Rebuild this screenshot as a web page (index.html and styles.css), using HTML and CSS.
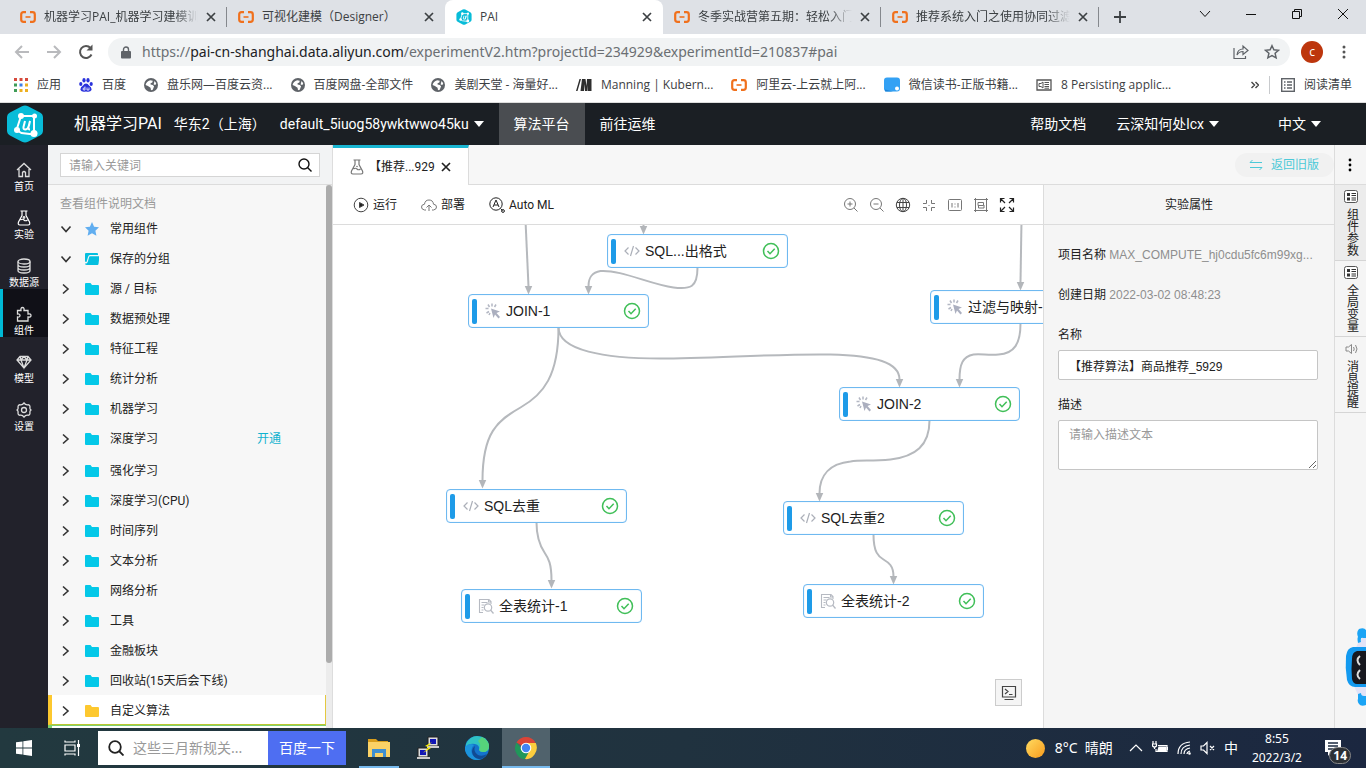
FILE: index.html
```html
<!DOCTYPE html>
<html lang="zh-CN">
<head>
<meta charset="utf-8">
<title>PAI</title>
<link rel="stylesheet" href="styles.css">
</head>
<body>
<svg class="defs" aria-hidden="true">
  <symbol id="ali" viewBox="0 0 16 12"><path d="M6 1.200H3.500Q1.200 1.200 1.200 3.500V8.500Q1.200 10.800 3.500 10.800H6M10 1.200h2.500Q14.800 1.200 14.800 3.500V8.500Q14.800 10.800 12.500 10.800H10" fill="none" stroke="#f0701c" stroke-width="2.200"/><path d="M5.500 6h5" stroke="#f0701c" stroke-width="1.600"/></symbol>
  <symbol id="pai" viewBox="0 0 36 38"><path d="M15 1.200q3-1.600 6 0l12 6.300q3 1.700 3 5v13q0 3.300-3 5L21 36.800q-3 1.600-6 0L3 30.500q-3-1.700-3-5v-13q0-3.300 3-5z" fill="#08bcd8"/><g stroke="#fff" stroke-width="2" fill="none"><path d="M14 11h13M14 11 9.500 25M27 11v17M9.500 25l5 3 12.500 1.500"/><path d="m18 16-1.500 6q-.5 2.500 2 2.500 2.500-.5 3.500-4l1-4.500-1.500 6q-.5 2.500 1.500 2.500"/></g><g fill="#fff"><circle cx="14" cy="11" r="3"/><circle cx="27.500" cy="11" r="2.500"/><circle cx="10" cy="25" r="3"/><circle cx="27" cy="28.500" r="3.500"/></g></symbol>
  <symbol id="x" viewBox="0 0 10 10"><path d="m1 1 8 8M9 1 1 9" stroke="currentColor" stroke-width="1.700"/></symbol>
  <symbol id="globe" viewBox="0 0 16 16"><circle cx="8" cy="8" r="8" fill="#5f6368"/><path d="M1.800 8q1-4.500 5.200-5.500L10 3 9.500 5l-2 1v1.500l2.500.5 1.500 1.500L10 13.500l-2 .5-.5-3L4.500 9zM12 3.500l2 2.500-1 2-2-.5z" fill="#fff"/></symbol>
  <symbol id="down" viewBox="0 0 12 12"><path d="m1.500 3.500 4.500 5 4.500-5" fill="none" stroke="currentColor" stroke-width="1.600"/></symbol>
  <symbol id="right" viewBox="0 0 12 12"><path d="m3 1.500 5 4.500-5 4.500" fill="none" stroke="currentColor" stroke-width="1.600"/></symbol>
  <symbol id="caret" viewBox="0 0 10 6"><path d="M0 0h10L5 6z" fill="currentColor"/></symbol>
  <symbol id="folder" viewBox="0 0 14 12"><path d="M1 0h4.500L7 2h6q1 0 1 1v8q0 1-1 1H1q-1 0-1-1V1q0-1 1-1" fill="currentColor"/></symbol>
  <symbol id="flask" viewBox="0 0 14 16"><path d="M3.500 1h7M5 1v4.500L1.500 12Q.5 15 3 15h8q2.500 0 1.500-3L9 5.500V1M3.500 10q2-1.500 3.500 0t3.500 0" fill="none" stroke="currentColor" stroke-width="1.200"/><circle cx="7" cy="7.500" r=".8" fill="currentColor"/></symbol>
  <symbol id="code" viewBox="0 0 16 12"><path d="M4.500 2.500 1 6l3.500 3.500M11.500 2.500 15 6l-3.500 3.500M9.500 1l-3 10" fill="none" stroke="#abafb8" stroke-width="1.200"/></symbol>
  <symbol id="click" viewBox="0 0 16 16"><path d="M7 .5v3M3 1.500l1.500 2.500M.5 5.500h3M1.500 10l2.500-1.500M11 1.500 9.500 4M4 12l1-2" stroke="#b3b7c3" stroke-width="1.500"/><path d="m6 5.500 9 3-3.500 1.500 3.500 4-1.500 1.500-3.500-4-1.500 3.500z" fill="#abafbf"/></symbol>
  <symbol id="stat" viewBox="0 0 16 16"><path d="M5 14.500H1.500v-13H11l2 2V6M3.500 4.500h6M3.500 7h3M3.500 9.500h2M3.500 12h2M10.500 1.500v2.500H13" fill="none" stroke="#b6bac2" stroke-width="1.100"/><circle cx="10" cy="9.500" r="3.700" fill="#fff" stroke="#b6bac2" stroke-width="1.200"/><path d="m12.500 12 3 3.500" stroke="#b6bac2" stroke-width="1.300"/></symbol>
  <symbol id="ok" viewBox="0 0 18 18"><circle cx="9" cy="9" r="7.500" fill="none" stroke="#40bf58" stroke-width="1.500"/><path d="m5.500 9 2.500 2.700 4.700-5" fill="none" stroke="#40bf58" stroke-width="1.500"/></symbol>
  <symbol id="params" viewBox="0 0 14 14"><rect x=".5" y=".5" width="13" height="12" rx="2" fill="#fff" stroke="#555"/><path d="M3 3h3v3H3zM3 7.500h3v3H3z" fill="#333"/><path d="M7.500 3.500H12M7.500 5.500H12M7.500 8H12M7.500 10H12" stroke="#333" stroke-width="1.200"/></symbol>
</svg>

<header class="browser">
  <nav class="tabs">
    <div class="tab"><svg class="i16"><use href="#ali"/></svg><span class="fade">机器学习PAI_机器学习建模训</span><button aria-label="关闭"><svg><use href="#x"/></svg></button></div>
    <div class="tab plain"><svg class="i16"><use href="#ali"/></svg><span>可视化建模（Designer）</span><button aria-label="关闭"><svg><use href="#x"/></svg></button></div>
    <div class="tab current"><svg class="i16"><use href="#pai"/></svg><span>PAI</span><button aria-label="关闭"><svg><use href="#x"/></svg></button></div>
    <div class="tab"><svg class="i16"><use href="#ali"/></svg><span class="fade">冬季实战营第五期：轻松入门</span><button aria-label="关闭"><svg><use href="#x"/></svg></button></div>
    <div class="tab"><svg class="i16"><use href="#ali"/></svg><span class="fade">推荐系统入门之使用协同过滤</span><button aria-label="关闭"><svg><use href="#x"/></svg></button></div>
    <button class="plus" aria-label="新标签页"><svg viewBox="0 0 12 12"><path d="M6 0v12M0 6h12" stroke="currentColor" stroke-width="1.800"/></svg></button>
    <div class="win">
      <button aria-label="搜索标签页"><svg viewBox="0 0 12 12"><path d="m1 3 5 5.500L11 3"/></svg></button>
      <button aria-label="最小化"><svg viewBox="0 0 12 12"><path d="M1 6.500h10"/></svg></button>
      <button aria-label="还原"><svg viewBox="0 0 12 12"><path d="M1.500 3.500h7v7h-7zM3.500 3V1.500h7v7H9"/></svg></button>
      <button aria-label="关闭窗口"><svg viewBox="0 0 12 12"><path d="m1 1 10 10M11 1 1 11"/></svg></button>
    </div>
  </nav>
  <div class="bar">
    <button class="nav off" aria-label="后退"><svg viewBox="0 0 16 16"><path d="M15 8H2M8 2 2 8l6 6"/></svg></button>
    <button class="nav off" aria-label="前进"><svg viewBox="0 0 16 16"><path d="M1 8h13M8 2l6 6-6 6"/></svg></button>
    <button class="nav" aria-label="刷新"><svg viewBox="0 0 16 16"><path d="M13.500 10.500A6 6 0 1 1 12.500 4"/><path d="M14.500.500v6h-6z" fill="currentColor" stroke="none"/></svg></button>
    <div class="omni">
      <svg class="lock" viewBox="0 0 10 13"><rect y="5" width="10" height="7.500" rx="1" fill="#5f6368"/><path d="M2.500 5V3.500a2.500 2.500 0 0 1 5 0V5" fill="none" stroke="#5f6368" stroke-width="1.400"/></svg>
      <span class="url">https://<b>pai-cn-shanghai.data.aliyun.com</b>/experimentV2.htm?projectId=234929&amp;experimentId=210837#pai</span>
      <button aria-label="分享"><svg viewBox="0 0 16 16"><path d="M1 4v10.500h11.500V12M4 11q.5-6 6-6V2l5 4.500-5 4v-3q-4 0-6 3.500z" fill="none" stroke="#5f6368" stroke-width="1.200"/></svg></button>
      <button aria-label="收藏"><svg viewBox="0 0 16 16"><path d="m8 1.700 1.900 4.100 4.600.5-3.400 3 1 4.500L8 11.500l-4.100 2.300 1-4.500-3.400-3 4.600-.5z" fill="none" stroke="#5f6368" stroke-width="1.500"/></svg></button>
    </div>
    <button class="avatar">c</button>
    <button class="nav" aria-label="菜单"><svg viewBox="0 0 16 16"><g fill="currentColor" stroke="none"><circle cx="8" cy="3" r="1.500"/><circle cx="8" cy="8" r="1.500"/><circle cx="8" cy="13" r="1.500"/></g></svg></button>
  </div>
  <nav class="marks">
    <a href="#"><svg class="i14" viewBox="0 0 14 14"><path d="M0 0h3v3H0zM5.500 0h3v3h-3zM11 0h3v3h-3z" fill="#d64a3c"/><path d="M0 5.500h3v3H0zM0 11h3v3H0z" fill="#3f9c58"/><path d="M5.500 5.500h3v3h-3z" fill="#3d7fe8"/><path d="M11 5.500h3v3h-3zM5.500 11h3v3h-3zM11 11h3v3h-3z" fill="#eeb021"/></svg>应用</a>
    <a href="#"><svg class="i14" viewBox="0 0 14 14"><g fill="#2a32dc"><ellipse cx="1.800" cy="6" rx="1.600" ry="2"/><ellipse cx="5" cy="2.300" rx="1.600" ry="2.200"/><ellipse cx="9" cy="2.300" rx="1.600" ry="2.200"/><ellipse cx="12.200" cy="6" rx="1.600" ry="2"/><path d="M7 5.500q2 0 3 2 3 2 2.500 4.500-1 2.500-5.500 1.500-4.500 1-5.500-1.500Q1 9.500 4 7.500q1-2 3-2"/></g><path d="M6 8.500v3.500H4.500q-1-1 0-2H6M8 9.500v2.500h2V9.500" fill="none" stroke="#fff" stroke-width=".8"/></svg>百度</a>
    <a href="#"><svg class="i14"><use href="#globe"/></svg>盘乐网—百度云资...</a>
    <a href="#"><svg class="i14"><use href="#globe"/></svg>百度网盘-全部文件</a>
    <a href="#"><svg class="i14"><use href="#globe"/></svg>美剧天堂 - 海量好...</a>
    <a href="#"><svg class="i16" viewBox="0 0 16 12"><path d="M3.500 0H5L1.500 12H0zM6 0h3.500l1 7 .5-7h4.500v12h-4V6l-.5 6H9L8 5v7H4.500z" fill="#2e2e2e"/></svg>Manning | Kubern...</a>
    <a href="#"><svg class="i16"><use href="#ali"/></svg>阿里云-上云就上阿...</a>
    <a href="#"><svg class="i16" viewBox="0 0 16 15"><rect width="16" height="14" rx="3" fill="#33a1f4"/><circle cx="13" cy="11" r="2" fill="#fff"/><path d="M1 12v2h8z" fill="#1c84d8"/></svg>微信读书-正版书籍...</a>
    <a href="#"><svg class="i16" viewBox="0 0 16 12"><path d="M1 1h14v10H1z" fill="none" stroke="#555" stroke-width="1.300"/><path d="M3 4.500h2l2-1.500v6L5 7.500H3zM8.500 3.500H13M8.500 5.500H13M8.500 7.500H13M8.500 9.200H13" fill="none" stroke="#555"/></svg>8 Persisting applic...</a>
    <button class="more" aria-label="更多书签"><svg viewBox="0 0 8 8"><path d="m.5 1 3 3-3 3M4.500 1l3 3-3 3" fill="none" stroke="#444" stroke-width="1.400"/></svg></button>
    <a class="reading" href="#"><svg class="i14" viewBox="0 0 14 14"><rect x=".7" y=".7" width="12.600" height="12.600" fill="none" stroke="#5f6368" stroke-width="1.400"/><path d="M3 4h1.500M3 7h1.500M3 10h1.500M6 4h5M6 7h5M6 10h5" stroke="#5f6368" stroke-width="1.400"/></svg>阅读清单</a>
  </nav>
</header>

<header class="top">
  <svg class="brand"><use href="#pai"/></svg>
  <span class="product">机器学习PAI</span>
  <span class="region">华东2（上海）</span>
  <button class="project">default_5iuog58ywktwwo45ku<svg><use href="#caret"/></svg></button>
  <a class="on" href="#">算法平台</a>
  <a href="#">前往运维</a>
  <a class="help" href="#">帮助文档</a>
  <button>云深知何处lcx<svg><use href="#caret"/></svg></button>
  <button class="lang">中文<svg><use href="#caret"/></svg></button>
</header>

<main class="app">
  <nav class="rail">
    <a href="#"><svg viewBox="0 0 16 16"><path d="M1 8 8 1.500 15 8M3 7v7.500h3.500v-4q1.500-2 3 0v4H13V7"/></svg>首页</a>
    <a href="#"><svg><use href="#flask"/></svg>实验</a>
    <a href="#"><svg viewBox="0 0 16 16"><ellipse cx="8" cy="3.500" rx="6" ry="2.500"/><path d="M2 3.500v9q0 2.500 6 2.500t6-2.500v-9M2 6.500Q2 9 8 9t6-2.500M2 9.500Q2 12 8 12t6-2.500"/></svg>数据源</a>
    <a class="on" href="#"><svg viewBox="0 0 16 16"><path d="M1.500 4.500H5q-.5-3 1.500-3t1.500 3h4V8q3-.5 3 1.500t-3 1.500v4H1.500v-4q2.500.3 2.500-1.500T1.500 8z"/></svg>组件</a>
    <a href="#"><svg viewBox="0 0 16 16"><path d="M4 2.500h8L15 6l-7 8-7-8zM1 6h14M5 6l3 8 3-8M4 2.500 5 6l3-3.500L11 6l1-3.500"/></svg>模型</a>
    <a href="#"><svg viewBox="0 0 16 16"><path d="M8 1q1.500 2 3.500 1.800Q14 2.500 14 5q-.5 2 1 3-1.500 1-1 3 0 2.500-2.500 2.200Q9.500 13 8 15q-1.500-2-3.500-1.800Q2 13.500 2 11q.5-2-1-3 1.500-1 1-3 0-2.500 2.500-2.200Q6.500 3 8 1z"/><circle cx="8" cy="8" r="2.500"/></svg>设置</a>
  </nav>

  <aside class="parts">
    <form class="find"><label><input type="text" placeholder="请输入关键词" aria-label="请输入关键词"></label><button type="button" aria-label="搜索"><svg viewBox="0 0 14 14"><circle cx="6" cy="6" r="5"/><path d="m9.500 9.500 4 4"/></svg></button></form>
    <div class="scroll">
      <div class="tree">
        <a class="doc" href="#">查看组件说明文档</a>
        <ul>
          <li><svg class="arr"><use href="#down"/></svg><svg class="fold" viewBox="0 0 14 14"><path d="m7 0 2.100 4.700 4.900.6-3.600 3.400 1 5.100L7 11.300l-4.400 2.500 1-5.100L0 5.300l4.900-.6z" fill="#61aef0"/></svg>常用组件</li>
          <li><svg class="arr"><use href="#down"/></svg><svg class="fold" viewBox="0 0 14 12"><path d="M1 0h11q1 0 1 1v1H5Q3.500 2 3 4L1.500 9H1Q0 9 0 8V1q0-1 1-1M5 3.200h9.500L13.500 11q-.2 1-1 1H2q-2 0-2-1.500 2 .5 2.800-1.800L4 4.500q.3-1.300 1-1.300" fill="#04bfdf"/></svg>保存的分组</li>
          <li><svg class="arr"><use href="#right"/></svg><svg class="fold"><use href="#folder"/></svg>源 / 目标</li>
          <li><svg class="arr"><use href="#right"/></svg><svg class="fold"><use href="#folder"/></svg>数据预处理</li>
          <li><svg class="arr"><use href="#right"/></svg><svg class="fold"><use href="#folder"/></svg>特征工程</li>
          <li><svg class="arr"><use href="#right"/></svg><svg class="fold"><use href="#folder"/></svg>统计分析</li>
          <li><svg class="arr"><use href="#right"/></svg><svg class="fold"><use href="#folder"/></svg>机器学习</li>
          <li class="tall"><svg class="arr"><use href="#right"/></svg><svg class="fold"><use href="#folder"/></svg>深度学习<a href="#">开通</a></li>
          <li><svg class="arr"><use href="#right"/></svg><svg class="fold"><use href="#folder"/></svg>强化学习</li>
          <li><svg class="arr"><use href="#right"/></svg><svg class="fold"><use href="#folder"/></svg>深度学习(CPU)</li>
          <li><svg class="arr"><use href="#right"/></svg><svg class="fold"><use href="#folder"/></svg>时间序列</li>
          <li><svg class="arr"><use href="#right"/></svg><svg class="fold"><use href="#folder"/></svg>文本分析</li>
          <li><svg class="arr"><use href="#right"/></svg><svg class="fold"><use href="#folder"/></svg>网络分析</li>
          <li><svg class="arr"><use href="#right"/></svg><svg class="fold"><use href="#folder"/></svg>工具</li>
          <li><svg class="arr"><use href="#right"/></svg><svg class="fold"><use href="#folder"/></svg>金融板块</li>
          <li><svg class="arr"><use href="#right"/></svg><svg class="fold"><use href="#folder"/></svg>回收站(15天后会下线)</li>
          <li class="custom"><svg class="arr"><use href="#right"/></svg><svg class="fold"><use href="#folder"/></svg>自定义算法</li>
          <li class="next"></li>
        </ul>
      </div>
      <div class="track"><div class="thumb"></div></div>
    </div>
  </aside>

  <section class="work">
    <div class="files">
      <div class="file"><svg class="beaker"><use href="#flask"/></svg><span>【推荐...929</span><button aria-label="关闭"><svg><use href="#x"/></svg></button></div>
      <button class="back"><svg viewBox="0 0 14 10"><path d="M3.500 0 1 2.500H13M1 7.500h12L10.500 10" fill="none" stroke="currentColor"/></svg>返回旧版</button>
    </div>
    <div class="split">
      <div class="editor">
        <div class="tools">
          <button><svg class="mid" viewBox="0 0 16 16"><circle cx="8" cy="8" r="6.800"/><path d="m6.500 5.500 4.500 2.500-4.500 2.500z" fill="#222"/></svg>运行</button>
          <button><svg viewBox="0 0 16 16"><path d="M5 13H3.500Q.5 12.500.5 10T3.500 7.200Q4 3 8 3t4.500 4.200q3 .3 3 2.800T12.500 13H11M8 14V8M5.500 10.500 8 8l2.500 2.500"/></svg>部署</button>
          <button><svg class="dark" viewBox="0 0 16 16"><circle cx="7" cy="7" r="6.200"/><path d="m4 10 3-7 3 7M5 8h4M11.500 11.500l2 2"/><circle cx="14" cy="14" r="1.400"/></svg>Auto ML</button>
          <div class="zoom">
            <button aria-label="放大"><svg viewBox="0 0 16 16"><circle cx="7" cy="7" r="5.500"/><path d="m11 11 3.500 3.500M4.500 7h5M7 4.500v5"/></svg></button>
            <button aria-label="缩小"><svg viewBox="0 0 16 16"><circle cx="7" cy="7" r="5.500"/><path d="m11 11 3.500 3.500M4.500 7h5"/></svg></button>
            <button aria-label="全局"><svg class="mid" viewBox="0 0 16 16"><circle cx="8" cy="8" r="6.700"/><ellipse cx="8" cy="8" rx="3.500" ry="6.700"/><path d="M2 5.500h12M2 10.500h12M8 1v14"/></svg></button>
            <button aria-label="居中"><svg viewBox="0 0 16 16"><path d="M2 6.500h3.500V3M14 6.500h-3.500V3M2 10.500h3.500V14M14 10.500h-3.500V14M7.500 8.500h1"/></svg></button>
            <button aria-label="原始大小"><svg viewBox="0 0 16 16"><rect x="1.500" y="2.500" width="13" height="11" rx="1"/><path d="M5 6v4.500M11 6v4.500M8 6.500v1M8 9.500v1"/></svg></button>
            <button aria-label="框选"><svg viewBox="0 0 16 16"><path d="M2.500 1v14M13.500 1v14M1 2.500h14M1 13.500h14M5 5.500h5.500v3H5zM5.500 8.500V11H11V8"/></svg></button>
            <button aria-label="全屏"><svg class="dark" viewBox="0 0 16 16"><path d="M1.500 5.500v-4h4M10.500 1.500h4v4M14.500 10.500v4h-4M5.500 14.500h-4v-4M2 2l4 4M14 2l-4 4M2 14l4-4M14 14l-4-4" stroke-width="1.200"/></svg></button>
          </div>
        </div>
        <div class="canvas">
          <svg class="edges">
            <marker id="tip" markerUnits="userSpaceOnUse" markerWidth="10" markerHeight="10" refX="5" refY="1"><path d="M1 0h8L5 9z" fill="#b3b6ba"/></marker>
            <g transform="translate(-332.500 -224.500)">
              <path d="M525 220Q526 240 528 286"/>
              <path d="M643 220v6"/>
              <path d="M697 267C697 287 690 289 673 287C650 284 620 269 600 270.500C591 272 588 277 588 286"/>
              <path d="M558 327C558 375 543 394 520 407S482 432 482 480"/>
              <path d="M558 327C558 350 604 358 660 358C710 358 780 353 830 354C875 355 899 362 899 379"/>
              <path d="M1021 220 1020 282"/>
              <path d="M1020 323C1020 343 1014 353 998 354C988 355 980 353 973 354C962 356 959 364 959 379"/>
              <path d="M929 420C929 445 915 456 890 459C870 461 860 459 850 461C830 463 819 474 819 493"/>
              <path d="M536 522C536 538 540 546 544 552S551 563 551 580"/>
              <path d="M873 534C873 552 878 556 883 559S893 565 893 576"/>
            </g>
          </svg>
          <div class="node n1"><svg><use href="#code"/></svg><span>SQL...出格式</span><svg class="ok"><use href="#ok"/></svg></div>
          <div class="node n2"><svg><use href="#click"/></svg><span>JOIN-1</span><svg class="ok"><use href="#ok"/></svg></div>
          <div class="node n3"><svg><use href="#click"/></svg><span>过滤与映射-1</span><svg class="ok"><use href="#ok"/></svg></div>
          <div class="node n4"><svg><use href="#click"/></svg><span>JOIN-2</span><svg class="ok"><use href="#ok"/></svg></div>
          <div class="node n5"><svg><use href="#code"/></svg><span>SQL去重</span><svg class="ok"><use href="#ok"/></svg></div>
          <div class="node n6"><svg><use href="#code"/></svg><span>SQL去重2</span><svg class="ok"><use href="#ok"/></svg></div>
          <div class="node n7"><svg><use href="#stat"/></svg><span>全表统计-1</span><svg class="ok"><use href="#ok"/></svg></div>
          <div class="node n8"><svg><use href="#stat"/></svg><span>全表统计-2</span><svg class="ok"><use href="#ok"/></svg></div>
          <button class="console" aria-label="控制台"><svg viewBox="0 0 16 16"><path d="M1.500 1.500h13v10.500h-13zM3.500 14.500h9M4 4l3 2.500L4 9M8 9.500h3.500" fill="none" stroke="#444" stroke-width="1.200"/></svg></button>
        </div>
      </div>
      <form class="props">
        <h2>实验属性</h2>
        <div class="fields">
          <p>项目名称 <span>MAX_COMPUTE_hj0cdu5fc6m99xg...</span></p>
          <p>创建日期 <span>2022-03-02 08:48:23</span></p>
          <label for="name">名称</label>
          <input id="name" type="text" value="【推荐算法】商品推荐_5929">
          <label for="desc">描述</label>
          <textarea id="desc" placeholder="请输入描述文本"></textarea>
        </div>
      </form>
    </div>
  </section>

  <nav class="side">
    <button class="dots" aria-label="更多"><svg viewBox="0 0 4 14"><circle cx="2" cy="2" r="1.400"/><circle cx="2" cy="7" r="1.400"/><circle cx="2" cy="12" r="1.400"/></svg></button>
    <button class="v on"><svg><use href="#params"/></svg><span>组件参数</span></button>
    <button class="v"><svg><use href="#params"/></svg><span>全局变量</span></button>
    <button class="v"><svg viewBox="0 0 14 14"><path d="M2 5h2.500l3-2.500v9L4.500 9H2zM9.500 5q1.500 2 0 4M11.500 3q3 4 0 8" fill="none" stroke="#888"/></svg><span>消息提醒</span></button>
    <svg class="robot" viewBox="0 0 21 80"><path d="M21 6 13 15 9 24h12zM9 58l4 9 8 8V58z" fill="#e2e3f7"/><path d="M14 1q5-2 7 1v8h-3q-3-1-2 4l-3 1q-1-5 0-6-2-5 1-8M13 66l3-1q0 3 3 3h2v9q-5 2-7-1-2-3-1-5z" fill="#1ba4f5"/><path d="M21 19H8Q2 20 1 28 0 40 2 52q2 7 8 7h11z" fill="#139af0"/><path d="M21 23h-9q-5 1-5 8-1 10 0 20 1 5 5 5h9z" fill="#17181f"/><path d="M15 28q-5 4 0 9M15 42q-5 5 0 9" fill="none" stroke="#ddd" stroke-width="2"/></svg>
  </nav>
</main>

<footer class="task">
  <button class="start" aria-label="开始"><svg viewBox="0 0 16 16"><path d="m0 2.300 6.500-.9v6.200H0zM7.300 1.300 16 0v7.600H7.300zM0 8.400h6.500v6.200L0 13.700zM7.300 8.400H16V16l-8.700-1.300z" fill="#fff"/></svg></button>
  <button class="view" aria-label="任务视图"><svg viewBox="0 0 16 16"><path d="M1 5h10v6H1zM1 .500V2h10V.500M1 15.500V14h10v1.500M14.500 0v16" fill="none" stroke="#fff" stroke-width="1.200"/><path d="M13 4h3v3h-3z" fill="#fff"/></svg></button>
  <form class="baidu"><svg viewBox="0 0 16 16"><circle cx="7" cy="7" r="5.800"/><path d="m11 11 4.500 4.500"/></svg><input type="text" aria-label="搜索" placeholder="这些三月新规关..."><button type="button">百度一下</button></form>
  <button class="prog open" aria-label="文件资源管理器"><svg viewBox="0 0 24 24"><path d="M1 3h8l2 2h10v6H1z" fill="#d99e1c"/><path d="M1 6h22v15H1z" fill="#fbd266"/><path d="M5 13h14v8h-3v-4H8v4H5z" fill="#3f8fd0"/></svg></button>
  <button class="prog" aria-label="PuTTY"><svg viewBox="0 0 24 24"><path d="M12 1h10v9H12zM2 12h10v9H2z" fill="#ddd" stroke="#222"/><path d="M14 3h6v5h-6zM4 14h6v5H4z" fill="#1116b5"/><path d="M11 10h12v2H11zM1 21h13v2H1z" fill="#ccc"/><path d="m16 6-7 4 4 1-6 6 8-5-4-1z" fill="#fff200"/></svg></button>
  <button class="prog" aria-label="Edge"><svg viewBox="0 0 24 24"><circle cx="12" cy="12" r="12" fill="#1473cc"/><path d="M1 8Q5 0 12 0q11 0 12 10 0 6-6 6-3 0-4-2 1-5-4-6-6-1-9 3z" fill="#2fc2c4"/><path d="M17 1q7 4 7 9 0 6-6 6-3 0-4-2 3-5-1-9z" fill="#56d37b"/><path d="M9 9q-4 3-2 9 3 5 9 5-7 3-13-3Q-1 15 0 11q4-5 9-2z" fill="#1c94dc"/><path d="M10 10q-2 6 3 9 4 2 9-1-3 5-8 5-6-1-7-7 0-4 3-6z" fill="#114b93"/></svg></button>
  <button class="prog open now" aria-label="Chrome"><svg viewBox="0 0 24 24"><path d="M12 12 2.500 6.500Q6 1 12 1t9.500 5.500z" fill="#db4437"/><path d="M12 12h-5L2.500 6.500Q-1 13 3 18.500T11 23l4-7z" fill="#20975a"/><path d="M12 7h9.800Q24.500 13 20.500 18.500T11 23l5-9z" fill="#fccd3d"/><circle cx="12" cy="12" r="5.300" fill="#fff"/><circle cx="12" cy="12" r="4.200" fill="#4285f4"/></svg></button>
  <div class="tray">
    <div class="weather"><i></i>8°C&nbsp; 晴朗</div>
    <svg viewBox="0 0 16 16"><path d="m2 11 6-6 6 6"/></svg>
    <svg viewBox="0 0 16 16"><path d="M6 5.500h9v6H4V9M15.500 7v3M1 1v3M4 1v3M.500 4h4v2q-2 2-4 0zM2.500 7v2"/><path d="M7 7h7v3.500H6z" fill="#fff"/></svg>
    <svg viewBox="0 0 16 16"><path d="M2 14Q2 3 14 2M5 14q0-8 9-9M8 14q0-5 6-6M11 14q0-2 3-3"/><circle cx="13.500" cy="13.500" r=".7"/></svg>
    <svg viewBox="0 0 16 16"><path d="M1 6h2.500L7 2.500v11L3.500 10H1zM10 6l4 4M14 6l-4 4"/></svg>
    <span class="ime">中</span>
    <time><span>8:55</span><span>2022/3/2</span></time>
    <button class="note" aria-label="通知"><svg viewBox="0 0 16 16"><path d="M0 0h16v12H6l-3 4v-4H0z" fill="#fff"/><path d="M3 3h10M3 6h10M3 9h6" stroke="#1c2b40" stroke-width="1.400"/></svg><b>14</b></button>
  </div>
</footer>
</body>
</html>
```
FILE: styles.css
```css
* { box-sizing: border-box; }
body {
  margin: 0;
  height: 100vh;
  display: flex;
  flex-direction: column;
  overflow: hidden;
  font: 12px/18px Roboto, "Liberation Sans", "Noto Sans CJK SC", sans-serif;
  color: #222;
}
button, input, textarea { font: inherit; color: inherit; }
button { border: 0; padding: 0; background: none; display: flex; align-items: center; justify-content: center; }
a { color: inherit; text-decoration: none; }
svg { flex: none; display: block; }
ul, h2, p { margin: 0; padding: 0; list-style: none; font-weight: normal; font-size: inherit; }
.defs { position: absolute; width: 0; height: 0; }
.i16 { width: 16px; height: 16px; }
.i14 { width: 14px; height: 14px; }

/* browser window */
.browser { font-family: "Open Sans", "Noto Sans CJK SC", sans-serif; background: #fff; color: #3c4043; }
.tabs { height: 34px; display: flex; background: #dee1e6; padding-left: 9px; }
.tab { flex: 0 1 218px; min-width: 0; display: flex; align-items: center; gap: 8px; padding: 0 11px 0 11px; position: relative; }
.tab span { flex: 1; overflow: hidden; white-space: nowrap; }
.tab button svg { width: 10px; height: 10px; }
.tab:not(.plain):not(.current)::after { content: ""; width: 1px; height: 20px; background: #85888d; position: absolute; right: 0; top: 7px; }
.tab.current { background: #fff; border-radius: 8px 8px 0 0; }
.fade { -webkit-mask-image: linear-gradient(90deg, #000 85%, transparent); mask-image: linear-gradient(90deg, #000 85%, transparent); }
.plus { width: 42px; }
.plus svg { width: 12px; height: 12px; }
.win { margin-left: auto; display: flex; height: 28px; }
.win button { width: 46px; }
.win svg { width: 12px; height: 12px; fill: none; stroke: #111; }
.bar { height: 36px; display: flex; align-items: center; padding: 0 6px; }
.nav { width: 32px; height: 28px; color: #555; }
.nav svg { width: 16px; height: 16px; fill: none; stroke: currentColor; stroke-width: 2; }
.nav.off { color: #b9babd; }
.omni { flex: 1; height: 28px; margin: 0 11px 0 6px; border-radius: 14px; background: #f1f3f4; display: flex; align-items: center; padding: 0 10px 0 13px; gap: 15px; }
.lock { width: 10px; height: 13px; }
.url { flex: 1; font: 14px/20px "Noto Sans", sans-serif; color: #6b6f73; margin-left: -4px; white-space: nowrap; overflow: hidden; }
.url b { font-weight: normal; color: #202124; }
.omni button svg { width: 16px; height: 16px; }
.avatar { width: 22px; height: 22px; border-radius: 50%; background: #bd360d; color: #fff; margin-right: 5px; }
.marks { height: 33px; display: flex; align-items: center; gap: 18px; padding: 0 14px 2px 14px; border-bottom: 1px solid #ddd; white-space: nowrap; }
.marks a { display: flex; align-items: center; gap: 9px; }
.more { margin-left: auto; }
.more svg { width: 8px; height: 8px; }
.marks .reading { border-left: 1px solid #c8cacd; padding-left: 11px; margin-left: -8px; }

/* console header */
.top { height: 42px; background: #1b1f24; color: #fff; font-size: 14px; display: flex; align-items: center; padding: 0 38px 0 7px; white-space: nowrap; }
.brand { width: 36px; height: 38px; margin-right: 31px; }
.product { font-size: 16px; margin-right: 12px; }
.region { width: 106px; }
.top button svg { width: 10px; height: 6px; margin-left: 5px; }
.top a { padding: 0 15px; line-height: 42px; }
.top a.on { background: #4a4d51; }
.top .help { margin-left: auto; }
.top button { margin-left: 15px; }
.top .project { margin-left: 0; margin-right: 15px; }
.top .lang { margin-left: 59px; margin-right: 7px; }

.app { flex: 1; min-height: 0; display: flex; }
.rail { width: 48px; background: #22222b; color: #fff; font-size: 10px; line-height: 12px; }
.rail a { height: 48px; display: flex; flex-direction: column; align-items: center; justify-content: flex-end; gap: 3px; }
.rail svg { width: 16px; height: 16px; fill: none; stroke: #ddd; stroke-width: 1.3; }
.rail .on { background: #101017; box-shadow: inset 3px 0 #00b9d5; }

/* component tree */
.parts { width: 285px; background: #f7f7f7; border-right: 1px solid #ddd; display: flex; flex-direction: column; }
.find { height: 40px; padding: 8px 12px; background: #f2f3f4; border-bottom: 1px solid #dcdcdc; display: flex; }
.find label { flex: 1; display: flex; }
.find input { width: 100%; height: 24px; border: 1px solid #d5d5d5; border-right: 0; background: #fff; padding: 1px 8px 0; }
.find button { width: 29px; height: 24px; background: #fff; border: 1px solid #d5d5d5; border-left: 0; }
.find svg { width: 14px; height: 14px; fill: none; stroke: #111; stroke-width: 1.4; }
::placeholder { color: #999; opacity: 1; }
.scroll { flex: 1; min-height: 0; display: flex; overflow: hidden; }
.tree { flex: 1; padding-top: 10px; }
.doc { display: block; padding-left: 12px; color: #999; }
.tree li { height: 30px; display: flex; align-items: center; padding: 1px 0 0 12px; }
.arr { width: 12px; height: 12px; margin-right: 13px; color: #333; }
.fold { width: 14px; height: 14px; margin-right: 11px; color: #04c8e8; }
.tree .tall { height: 32px; padding-bottom: 2px; }
.tree .tall a { margin: 0 45px 0 auto; color: #11b2cf; }
.tree .custom { background: #fff; border-left: 4px solid #fdc82f; border-right: 1px solid #e4c840; border-bottom: 1px solid #bcc832; padding-left: 8px; padding-top: 2px; }
.custom .fold { color: #fdc82f; }
.tree .next { border-left: 4px solid #7ecf6e; border-top: 1px solid #7ecf6e; background: #fff; }
.track { width: 6px; background: #ececec; }
.thumb { height: 88%; background: #acacac; border-radius: 3px; }

/* editor */
.work { flex: 1; min-width: 0; display: flex; flex-direction: column; }
.files { height: 40px; display: flex; background: #f7f7f7; border-bottom: 1px solid #dcdcdc; align-items: center; }
.file { align-self: flex-start; height: 40px; width: 136px; background: #fff; border-top: 3px solid #19b5d1; border-right: 1px solid #dcdcdc; display: flex; align-items: center; padding-left: 17px; white-space: nowrap; }
.beaker { width: 14px; height: 16px; color: #777; margin-right: 5px; }
.file button { margin-left: 6px; }
.file button svg { width: 10px; height: 10px; }
.back { margin-left: auto; width: 99px; height: 24px; border-radius: 12px; background: #f1f1f1; color: #4cc9d8; gap: 8px; padding-right: 1px; }
.back svg { width: 14px; height: 10px; }
.split { flex: 1; min-height: 0; display: flex; }
.editor { flex: 1; min-width: 0; display: flex; flex-direction: column; }
.tools { height: 40px; border-bottom: 1px solid #dcdcdc; display: flex; align-items: center; padding: 0 28px 0 20px; gap: 24px; }
.tools button { gap: 4px; }
.tools svg { width: 16px; height: 16px; fill: none; stroke: #777; }
.tools svg.mid { stroke: #444; }
.tools svg.dark { stroke: #222; }
.zoom { margin-left: auto; display: flex; gap: 10px; }
.canvas { flex: 1; position: relative; overflow: hidden; background: #fff; }
.edges { position: absolute; width: 100%; height: 100%; }
.edges g path { fill: none; stroke: #b6b9bd; stroke-width: 2; marker-end: url(#tip); }
.node { position: absolute; width: 181px; height: 34px; background: #fff; border: 1px solid #6fb9f0; box-shadow: inset 0 0 1px #8fcaff; border-radius: 4px; display: flex; align-items: center; padding: 0 7px 0 3px; font: 14px/20px "Liberation Sans", "Noto Sans CJK SC", sans-serif; white-space: nowrap; }
.node::before { content: ""; width: 5px; height: 25px; border-radius: 2px; background: #1e9be8; margin-right: 8px; }
.node svg { width: 16px; height: 16px; margin-right: 5px; }
.node span { flex: 1; }
.node .ok { width: 18px; height: 18px; margin: 0; }
.n1 { left: 274px; top: 9px; }
.n2 { left: 135px; top: 69px; }
.n3 { left: 597px; top: 65px; }
.n4 { left: 506px; top: 162px; }
.n5 { left: 113px; top: 264px; }
.n6 { left: 450px; top: 276px; }
.n7 { left: 128px; top: 364px; }
.n8 { left: 470px; top: 359px; }
.console { position: absolute; right: 21px; bottom: 22px; width: 27px; height: 27px; background: #f5f5f5; border: 1px solid #ccc; }
.console svg { width: 16px; height: 16px; }

.props { width: 291px; background: #f5f5f5; border-left: 1px solid #dcdcdc; font-family: "Liberation Sans", "Noto Sans CJK SC", sans-serif; }
.props h2 { height: 40px; line-height: 40px; text-align: center; border-bottom: 1px solid #dcdcdc; }
.fields { padding: 20px 16px 0 14px; display: flex; flex-direction: column; }
.fields p { line-height: 20px; margin-bottom: 20px; white-space: nowrap; }
.fields p span { color: #8e8e8e; }
.fields label { line-height: 20px; margin-bottom: 5px; }
.fields input { height: 30px; border: 1px solid #c5c5c5; border-radius: 2px; background: #fff; padding: 0 10px; margin-bottom: 15px; }
.fields textarea { height: 50px; border: 1px solid #c5c5c5; border-radius: 2px; background: #fff; padding: 5px 10px; }

.side { width: 32px; background: #f5f5f5; border-left: 1px solid #dcdcdc; position: relative; overflow: hidden; }
.dots { width: 100%; height: 40px; padding-right: 2px; border-bottom: 1px solid #dcdcdc; }
.dots svg { width: 4px; height: 14px; }
.v { width: 100%; height: 76px; flex-direction: column; gap: 4px; border-bottom: 1px solid #d5d5d5; }
.v.on { background: #ececec; }
.v svg { width: 14px; height: 14px; }
.v span { writing-mode: vertical-rl; line-height: 12px; padding-left: 2px; }
.robot { position: absolute; right: 0; bottom: 20px; width: 21px; height: 80px; }

/* taskbar */
.task { height: 40px; background: linear-gradient(90deg, #22393f, #20323f 50%, #1b2740); color: #fff; display: flex; font: 14px/20px "Noto Sans", "Noto Sans CJK SC", sans-serif; }
.start, .view { width: 48px; }
.view { width: 50px; padding-right: 3px; }
.start svg, .view svg { width: 16px; height: 16px; }
.baidu { width: 248px; display: flex; align-items: center; background: #fff; margin: 3px 9px 3px 0; padding-left: 10px; }
.baidu svg { width: 16px; height: 16px; fill: none; stroke: #222; stroke-width: 1.8; }
.baidu input { flex: 1; min-width: 0; border: 0; background: none; padding: 0 0 0 9px; outline: 0; }
.baidu button { width: 78px; align-self: stretch; background: #4e6ef2; color: #fff; }
.prog { width: 48px; position: relative; margin-right: 1px; }
.prog svg { width: 24px; height: 24px; }
.prog.open::after { content: ""; position: absolute; left: 4px; right: 4px; bottom: 0; height: 2px; background: #76b9ed; }
.prog.now { background: #50626c; }
.prog.now::after { left: 0; right: 0; }
.tray { margin-left: auto; display: flex; align-items: center; gap: 8px; padding-right: 17px; white-space: nowrap; }
.tray > svg { width: 16px; height: 16px; fill: none; stroke: #fff; stroke-width: 1.2; }
.weather { display: flex; align-items: center; gap: 10px; margin-right: 7px; }
.weather i { width: 19px; height: 19px; border-radius: 50%; background: linear-gradient(135deg, #ffdc62, #f79a1c); }
time { display: flex; flex-direction: column; align-items: center; font-size: 12px; line-height: 19px; margin-left: 6px; }
.note { position: relative; width: 32px; height: 32px; margin-left: 7px; }
.note svg { width: 16px; height: 16px; }
.note b { position: absolute; right: -2px; bottom: 0; border: 1px solid #888; border-radius: 9px; background: #2c3035; padding: 0 3px; font: bold 12px/15px "Noto Sans", sans-serif; }
```
